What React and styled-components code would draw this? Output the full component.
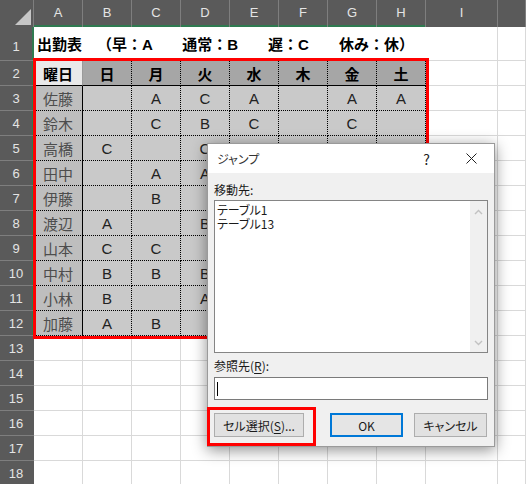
import React from "react";
import styled, { createGlobalStyle } from "styled-components";

const GlobalStyle = createGlobalStyle`
  html, body {
    margin: 0;
    padding: 0;
    background: #fff;
  }
  body {
    font-family: "Liberation Sans", "Noto Sans CJK JP", sans-serif;
  }
`;

const HEAD_BG = "#5a5a5a";
const HEAD_LINE = "#7e7e7e";
const GRID = "#d9d9d9";
const SEL = "#2f7a50";

const COLS = ["A", "B", "C", "D", "E", "F", "G", "H", "I", ""];
const DAYS = ["日", "月", "火", "水", "木", "金", "土"];
const ROWS = [
  ["佐藤", "", "A", "C", "A", "", "A", "A"],
  ["鈴木", "", "C", "B", "C", "", "C", ""],
  ["高橋", "C", "", "C", "", "A", "B", ""],
  ["田中", "", "A", "A", "B", "", "C", ""],
  ["伊藤", "", "B", "", "A", "C", "", ""],
  ["渡辺", "A", "", "B", "", "", "A", ""],
  ["山本", "C", "C", "", "B", "", "", ""],
  ["中村", "B", "B", "B", "", "", "", ""],
  ["小林", "B", "", "A", "", "", "", ""],
  ["加藤", "A", "B", "", "", "", "", ""],
];

// sheet

const Sheet = styled.div`
  position: relative;
  width: 526px;
  height: 484px;
  overflow: hidden;
  display: grid;
  grid-template-columns: 34px repeat(8, 49px) 72px 1fr;
  grid-template-rows: 27px 34px repeat(17, 25px);
`;

const Corner = styled.div`
  box-sizing: border-box;
  background: ${HEAD_BG};
  border-right: 1px solid ${HEAD_LINE};
  display: flex;
  align-items: flex-end;
  justify-content: flex-end;
  padding: 0 2px 2px 0;
`;

const CornerMark = styled.div`
  width: 0;
  height: 0;
  border-style: solid;
  border-width: 0 0 16px 16px;
  border-color: transparent transparent #c6c6c6 transparent;
`;

const ColHead = styled.div`
  box-sizing: border-box;
  background: ${HEAD_BG};
  color: #e4e4e4;
  font-size: 13px;
  border-right: 1px solid ${HEAD_LINE};
  box-shadow: ${(p) => (p.$sel ? `inset 0 -2px 0 ${SEL}` : "none")};
  display: flex;
  align-items: center;
  justify-content: center;
  padding-bottom: 2px;
`;

const RowHead = styled.div`
  box-sizing: border-box;
  background: ${HEAD_BG};
  color: #e4e4e4;
  font-size: 13px;
  border-bottom: 1px solid ${HEAD_LINE};
  box-shadow: ${(p) => (p.$sel ? `inset -2px 0 0 ${SEL}` : "none")};
  display: flex;
  align-items: ${(p) => (p.$tall ? "flex-end" : "center")};
  justify-content: center;
  padding: 0 2px ${(p) => (p.$tall ? "6px" : "0")} 0;
`;

const Cell = styled.div`
  box-sizing: border-box;
  background: #fff;
  border-right: 1px solid ${GRID};
  border-bottom: 1px solid ${GRID};
`;

const TitleCell = styled(Cell)`
  grid-column: span 8;
  border-right: none;
  display: flex;
  align-items: center;
  padding: 0 0 0 3px;
  font-size: 15px;
  font-weight: bold;
  color: #000;
  white-space: pre;
  text-spacing-trim: space-all;
`;

const TableCell = styled.div`
  box-sizing: border-box;
  background: ${(p) => p.$bg};
  color: ${(p) => p.$color || "#222"};
  font-weight: ${(p) => (p.$bold ? "bold" : "normal")};
  font-size: 15px;
  border-right: 1px ${(p) => p.$right || "dotted #000"};
  border-bottom: 1px ${(p) => p.$bottom || "dotted #000"};
  display: flex;
  align-items: center;
  justify-content: center;
`;

const RangeMark = styled.div`
  position: absolute;
  left: 33px;
  top: 58px;
  width: 396px;
  height: 281px;
  box-sizing: border-box;
  border: 3px solid #ff0000;
  pointer-events: none;
`;

// dialog

const Dialog = styled.div`
  position: absolute;
  left: 207px;
  top: 143px;
  width: 288px;
  height: 304px;
  box-sizing: border-box;
  border: 1px solid #9a9a9a;
  background: #f0f0f0;
  box-shadow: 0 3px 14px rgba(0, 0, 0, 0.45);
  display: flex;
  flex-direction: column;
  font-family: "Noto Sans CJK JP", "Liberation Sans", sans-serif;
  font-feature-settings: "palt";
  font-size: 12px;
  color: #1a1a1a;
`;

const TitleBar = styled.div`
  height: 29px;
  background: #fff;
  display: flex;
  align-items: center;
`;

const TitleText = styled.div`
  flex: 1;
  padding-left: 9px;
  color: #333;
`;

const TitleButton = styled.div`
  width: 45px;
  height: 29px;
  display: flex;
  align-items: center;
  justify-content: center;
  font-size: 14px;
  color: #222;
`;

const Body = styled.div`
  flex: 1;
  display: flex;
  flex-direction: column;
  padding: 8px 6px 0 6px;
`;

const Label = styled.div`
  line-height: 18px;
  margin-top: ${(p) => p.$top || 0}px;
`;

const ListBox = styled.div`
  margin-top: 1px;
  height: 153px;
  box-sizing: border-box;
  border: 1px solid #858585;
  background: #fff;
  display: flex;
`;

const ListItems = styled.div`
  flex: 1;
  padding: 2px 2px;
  line-height: 14px;
`;

const ScrollBar = styled.div`
  width: 17px;
  background: #f0f0f0;
  display: flex;
  flex-direction: column;
  justify-content: space-between;
  align-items: center;
  padding: 8px 0 6px;
`;

const Input = styled.div`
  margin-top: 2px;
  height: 23px;
  box-sizing: border-box;
  border: 1px solid #7a7a7a;
  background: #fff;
  display: flex;
  align-items: center;
  padding-left: 2px;
`;

const Caret = styled.div`
  width: 1px;
  height: 14px;
  background: #000;
`;

const ButtonRow = styled.div`
  margin-top: 13px;
  display: flex;
`;

const Button = styled.div`
  box-sizing: border-box;
  width: ${(p) => p.$w}px;
  height: 24px;
  margin-left: ${(p) => p.$gap || 0}px;
  background: ${(p) => (p.$default ? "#e5e5e5" : "#e1e1e1")};
  border: ${(p) => (p.$default ? "2px solid #0078d7" : "1px solid #adadad")};
  display: flex;
  align-items: center;
  justify-content: center;
`;

const Key = styled.span`
  text-decoration: underline;
  text-underline-offset: 2px;
`;

const ButtonMark = styled.div`
  position: absolute;
  left: 207px;
  top: 407px;
  width: 109px;
  height: 39px;
  box-sizing: border-box;
  border: 3px solid #ff0000;
  pointer-events: none;
`;

const Chevron = ({ down }) => (
  <svg width="9" height="6" viewBox="0 0 9 6">
    <path
      d={down ? "M1 1 L4.5 4.5 L8 1" : "M1 5 L4.5 1.5 L8 5"}
      fill="none"
      stroke="#c2c2c2"
      strokeWidth="1.4"
    />
  </svg>
);

const CloseIcon = () => (
  <svg width="11" height="11" viewBox="0 0 11 11">
    <path d="M0.5 0.5 L10.5 10.5 M10.5 0.5 L0.5 10.5" stroke="#222" strokeWidth="1" />
  </svg>
);

const GotoDialog = () => (
  <Dialog>
    <TitleBar>
      <TitleText>ジャンプ</TitleText>
      <TitleButton>?</TitleButton>
      <TitleButton>
        <CloseIcon />
      </TitleButton>
    </TitleBar>
    <Body>
      <Label>移動先:</Label>
      <ListBox>
        <ListItems>
          <div>テーブル1</div>
          <div>テーブル13</div>
        </ListItems>
        <ScrollBar>
          <Chevron />
          <Chevron down />
        </ScrollBar>
      </ListBox>
      <Label $top={4}>
        参照先(<Key>R</Key>):
      </Label>
      <Input>
        <Caret />
      </Input>
      <ButtonRow>
        <Button $w={90}>
          セル選択(<Key>S</Key>)...
        </Button>
        <Button $w={73} $gap={26} $default>
          OK
        </Button>
        <Button $w={73} $gap={11}>
          キャンセル
        </Button>
      </ButtonRow>
    </Body>
  </Dialog>
);

export default function App() {
  const blanks = (n, key) =>
    Array.from({ length: n }, (_, i) => <Cell key={`${key}-${i}`} />);

  return (
    <>
      <GlobalStyle />
      <Sheet>
        <Corner>
          <CornerMark />
        </Corner>
        {COLS.map((c, i) => (
          <ColHead key={`h${i}`} $sel={i < 8}>
            {c}
          </ColHead>
        ))}

        <RowHead $sel $tall>
          1
        </RowHead>
        <TitleCell>{"出勤表　（早：A　　通常：B　　遅：C　　休み：休）"}</TitleCell>
        {blanks(2, "r1")}

        <RowHead $sel>2</RowHead>
        <TableCell $bg="#e9e9e9" $bold $color="#000" $right="solid #9a9a9a" $bottom="solid #000">
          曜日
        </TableCell>
        {DAYS.map((d) => (
          <TableCell key={d} $bg="#a6a6a6" $bold $color="#000" $bottom="solid #000">
            {d}
          </TableCell>
        ))}
        {blanks(2, "r2")}

        {ROWS.map((r, ri) => (
          <React.Fragment key={r[0]}>
            <RowHead $sel>{ri + 3}</RowHead>
            <TableCell $bg="#bebebe" $color="#4d4d4d" $right="solid #000">
              {r[0]}
            </TableCell>
            {r.slice(1).map((v, ci) => (
              <TableCell key={ci} $bg="#c9c9c9">
                {v}
              </TableCell>
            ))}
            {blanks(2, `r${ri + 3}`)}
          </React.Fragment>
        ))}

        {[13, 14, 15, 16, 17, 18].map((n) => (
          <React.Fragment key={n}>
            <RowHead>{n}</RowHead>
            {blanks(10, `r${n}`)}
          </React.Fragment>
        ))}

        <RangeMark />
        <GotoDialog />
        <ButtonMark />
      </Sheet>
    </>
  );
}
